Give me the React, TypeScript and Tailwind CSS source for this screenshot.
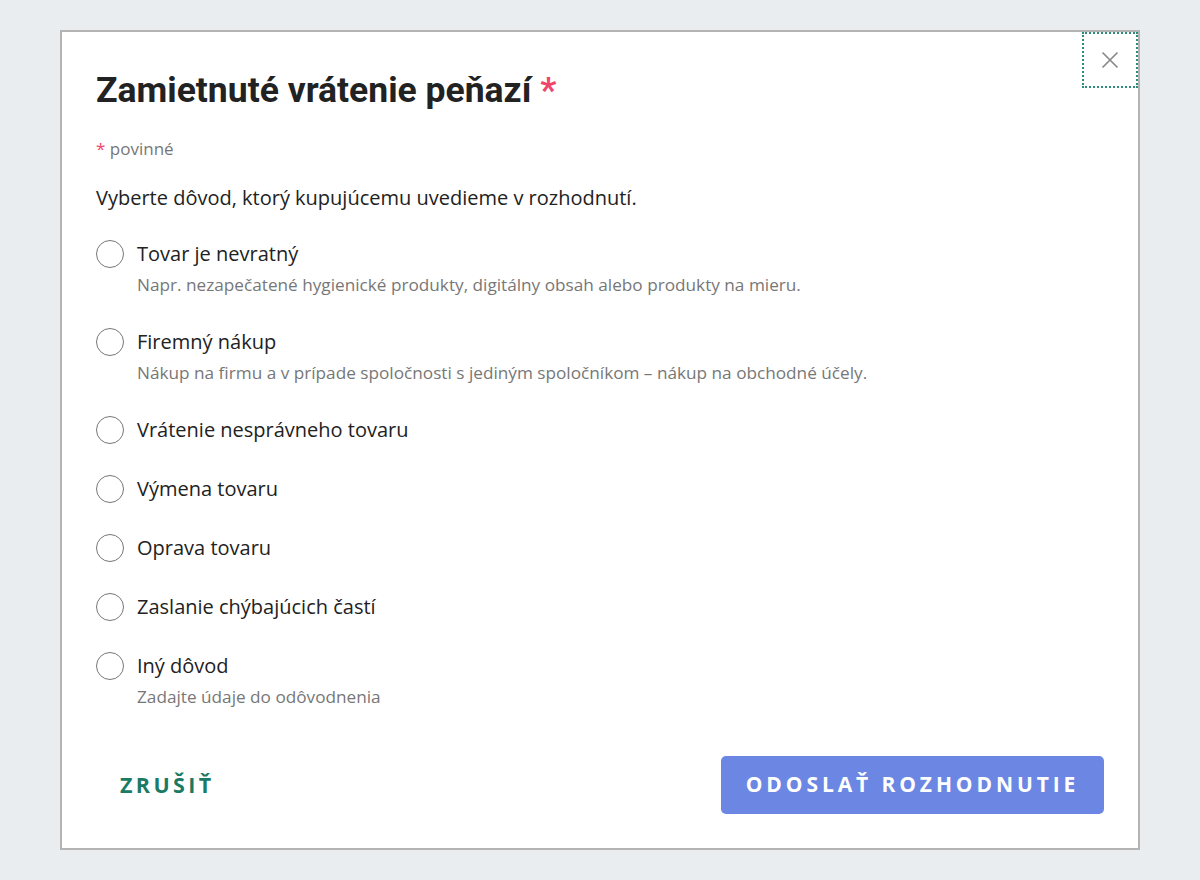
import React from "react";

const options: { label: string; desc?: string }[] = [
  { label: "Tovar je nevratný", desc: "Napr. nezapečatené hygienické produkty, digitálny obsah alebo produkty na mieru." },
  { label: "Firemný nákup", desc: "Nákup na firmu a v prípade spoločnosti s jediným spoločníkom – nákup na obchodné účely." },
  { label: "Vrátenie nesprávneho tovaru" },
  { label: "Výmena tovaru" },
  { label: "Oprava tovaru" },
  { label: "Zaslanie chýbajúcich častí" },
  { label: "Iný dôvod", desc: "Zadajte údaje do odôvodnenia" },
];

export default function App() {
  return (
    <div className="w-[1200px] h-[880px] bg-[#e9edf0] pt-[30px] pl-[60px]" style={{ fontFamily: "'Open Sans', sans-serif" }}>
      <div className="relative w-[1080px] h-[820px] bg-white border-2 border-[#b4b4b4] flex flex-col">
        <button className="absolute right-0 top-0 w-[56px] h-[56px] flex items-center justify-center border-2 border-dotted border-[#2e8b7a] text-[#8a8a8a]">
          <svg width="18" height="18" viewBox="0 0 18 18" fill="none" stroke="currentColor" strokeWidth="1.7">
            <path d="M1.5 1.5L16.5 16.5M16.5 1.5L1.5 16.5" />
          </svg>
        </button>
        <div className="pl-[34px] pt-[38px] flex flex-col">
          <h1 className="text-[35.5px] leading-[40px] font-bold text-[#222]" style={{ fontFamily: "Roboto, sans-serif" }}>
            Zamietnuté vrátenie peňazí <span className="text-[#f0456a]">*</span>
          </h1>
          <div className="mt-[28px] text-[17px] leading-[22px] text-[#777]">
            <span className="text-[#f0456a]">*</span> povinné
          </div>
          <div className="mt-[24px] text-[20px] leading-[28px] text-[#222]">
            Vyberte dôvod, ktorý kupujúcemu uvedieme v rozhodnutí.
          </div>
          <div className="mt-[28px] flex flex-col gap-[31px]">
            {options.map((o) => (
              <div key={o.label} className="flex flex-col">
                <div className="flex items-center h-[28px]">
                  <span className="w-[28px] h-[28px] shrink-0 rounded-full border-[1.5px] border-[#777] bg-white" />
                  <span className="ml-[13px] text-[20px] leading-[28px] text-[#222]">{o.label}</span>
                </div>
                {o.desc && (
                  <div className="mt-[5px] ml-[41px] text-[17.2px] leading-[24px] text-[#777]">{o.desc}</div>
                )}
              </div>
            ))}
          </div>
        </div>
        <div className="mt-auto mb-[34px] flex items-center justify-between pl-[58px] pr-[34px]">
          <button className="text-[21.5px] font-bold tracking-[3.4px] text-[#1b7a64]">ZRUŠIŤ</button>
          <button className="w-[383px] h-[58px] rounded-[5px] bg-[#6b87e3] text-white text-[21px] font-bold tracking-[3.9px]">
            ODOSLAŤ ROZHODNUTIE
          </button>
        </div>
      </div>
    </div>
  );
}
